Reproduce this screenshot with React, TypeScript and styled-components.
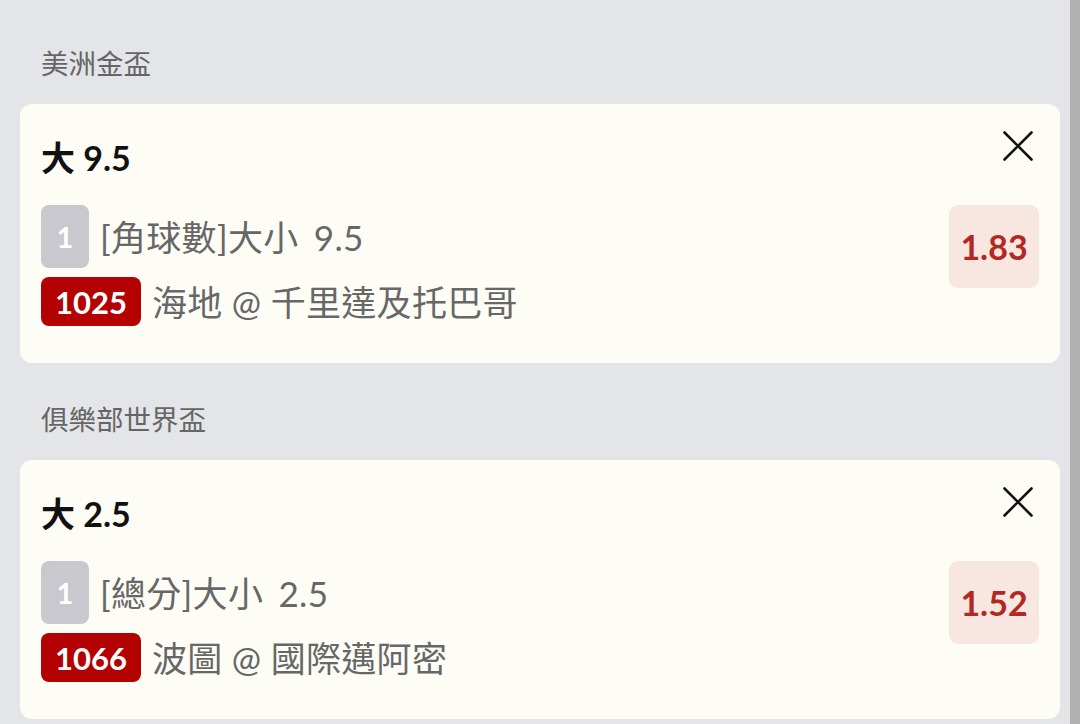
import React from "react";
import styled, { createGlobalStyle } from "styled-components";

const Global = createGlobalStyle`
  html, body { margin: 0; padding: 0; }
  body {
    background: #e4e5e8;
    font-family: Lato, "Noto Sans CJK TC", sans-serif;
    -webkit-font-smoothing: antialiased;
  }
  #root { height: 724px; overflow: hidden; }
`;

const Page = styled.div`
  display: flex;
  height: 724px;
`;

const Main = styled.div`
  flex: 1;
  padding: 7px 10px 0 20px;
  display: flex;
  flex-direction: column;
`;

const Scrollbar = styled.div`
  width: 10px;
  background: #b1b1b1;
`;

const SectionTitle = styled.div`
  font-size: 27.5px;
  line-height: 40px;
  color: #656565;
  padding: 37px 0 20px 21px;
`;

const Card = styled.div`
  background: #fefdf5;
  border-radius: 12px;
  padding: 27px 21px 37px 21px;
  display: flex;
  flex-direction: column;
`;

const HeaderRow = styled.div`
  display: flex;
  justify-content: space-between;
  align-items: flex-start;
`;

const Title = styled.div`
  font-size: 34px;
  font-weight: 700;
  line-height: 40px;
  color: #111;
  padding-top: 7px;
`;

const CloseButton = styled.button`
  width: 30px;
  height: 30px;
  margin-right: 6px;
  padding: 0;
  border: none;
  background: none;
  display: flex;
  cursor: pointer;
`;

const Body = styled.div`
  display: flex;
  justify-content: space-between;
  align-items: flex-start;
  margin-top: 27px;
`;

const Lines = styled.div`
  display: flex;
  flex-direction: column;
  gap: 9px;
`;

const Line = styled.div`
  display: flex;
  align-items: center;
  gap: 11px;
`;

const Badge = styled.span<{ $variant: "gray" | "red" }>`
  display: inline-flex;
  align-items: center;
  justify-content: center;
  box-sizing: border-box;
  border-radius: 8px;
  font-weight: 700;
  color: #fff;
  ${(p) =>
    p.$variant === "gray"
      ? `
    width: 48px;
    height: 63px;
    background: #c8c8ce;
    font-size: 29px;
  `
      : `
    min-width: 100px;
    height: 49px;
    padding: 0 10px;
    background: #b40203;
    font-size: 31px;
  `}
`;

const LineText = styled.span<{ $market?: boolean }>`
  font-size: 35px;
  line-height: 40px;
  letter-spacing: 0.3px;
  word-spacing: ${(p) => (p.$market ? "6px" : "0")};
  color: #676767;
  white-space: nowrap;
`;

const Odds = styled.div`
  width: 90px;
  height: 83px;
  border-radius: 9px;
  background: #f8e6e0;
  color: #b22822;
  font-weight: 700;
  font-size: 34px;
  display: flex;
  align-items: center;
  justify-content: center;
`;

const CloseIcon = () => (
  <svg width="30" height="30" viewBox="0 0 30 30">
    <path d="M1.5 1.5 L28.5 28.5 M28.5 1.5 L1.5 28.5" stroke="#111" strokeWidth="2.6" strokeLinecap="round" />
  </svg>
);

type Bet = {
  league: string;
  title: string;
  market: string;
  code: string;
  match: string;
  odds: string;
};

const bets: Bet[] = [
  { league: "美洲金盃", title: "大 9.5", market: "[角球數]大小 9.5", code: "1025", match: "海地 @ 千里達及托巴哥", odds: "1.83" },
  { league: "俱樂部世界盃", title: "大 2.5", market: "[總分]大小 2.5", code: "1066", match: "波圖 @ 國際邁阿密", odds: "1.52" },
];

export default function App() {
  return (
    <>
      <Global />
      <Page>
        <Main>
          {bets.map((b) => (
            <React.Fragment key={b.code}>
              <SectionTitle>{b.league}</SectionTitle>
              <Card>
                <HeaderRow>
                  <Title>{b.title}</Title>
                  <CloseButton aria-label="close">
                    <CloseIcon />
                  </CloseButton>
                </HeaderRow>
                <Body>
                  <Lines>
                    <Line>
                      <Badge $variant="gray">1</Badge>
                      <LineText $market>{b.market}</LineText>
                    </Line>
                    <Line>
                      <Badge $variant="red">{b.code}</Badge>
                      <LineText>{b.match}</LineText>
                    </Line>
                  </Lines>
                  <Odds>{b.odds}</Odds>
                </Body>
              </Card>
            </React.Fragment>
          ))}
        </Main>
        <Scrollbar />
      </Page>
    </>
  );
}
